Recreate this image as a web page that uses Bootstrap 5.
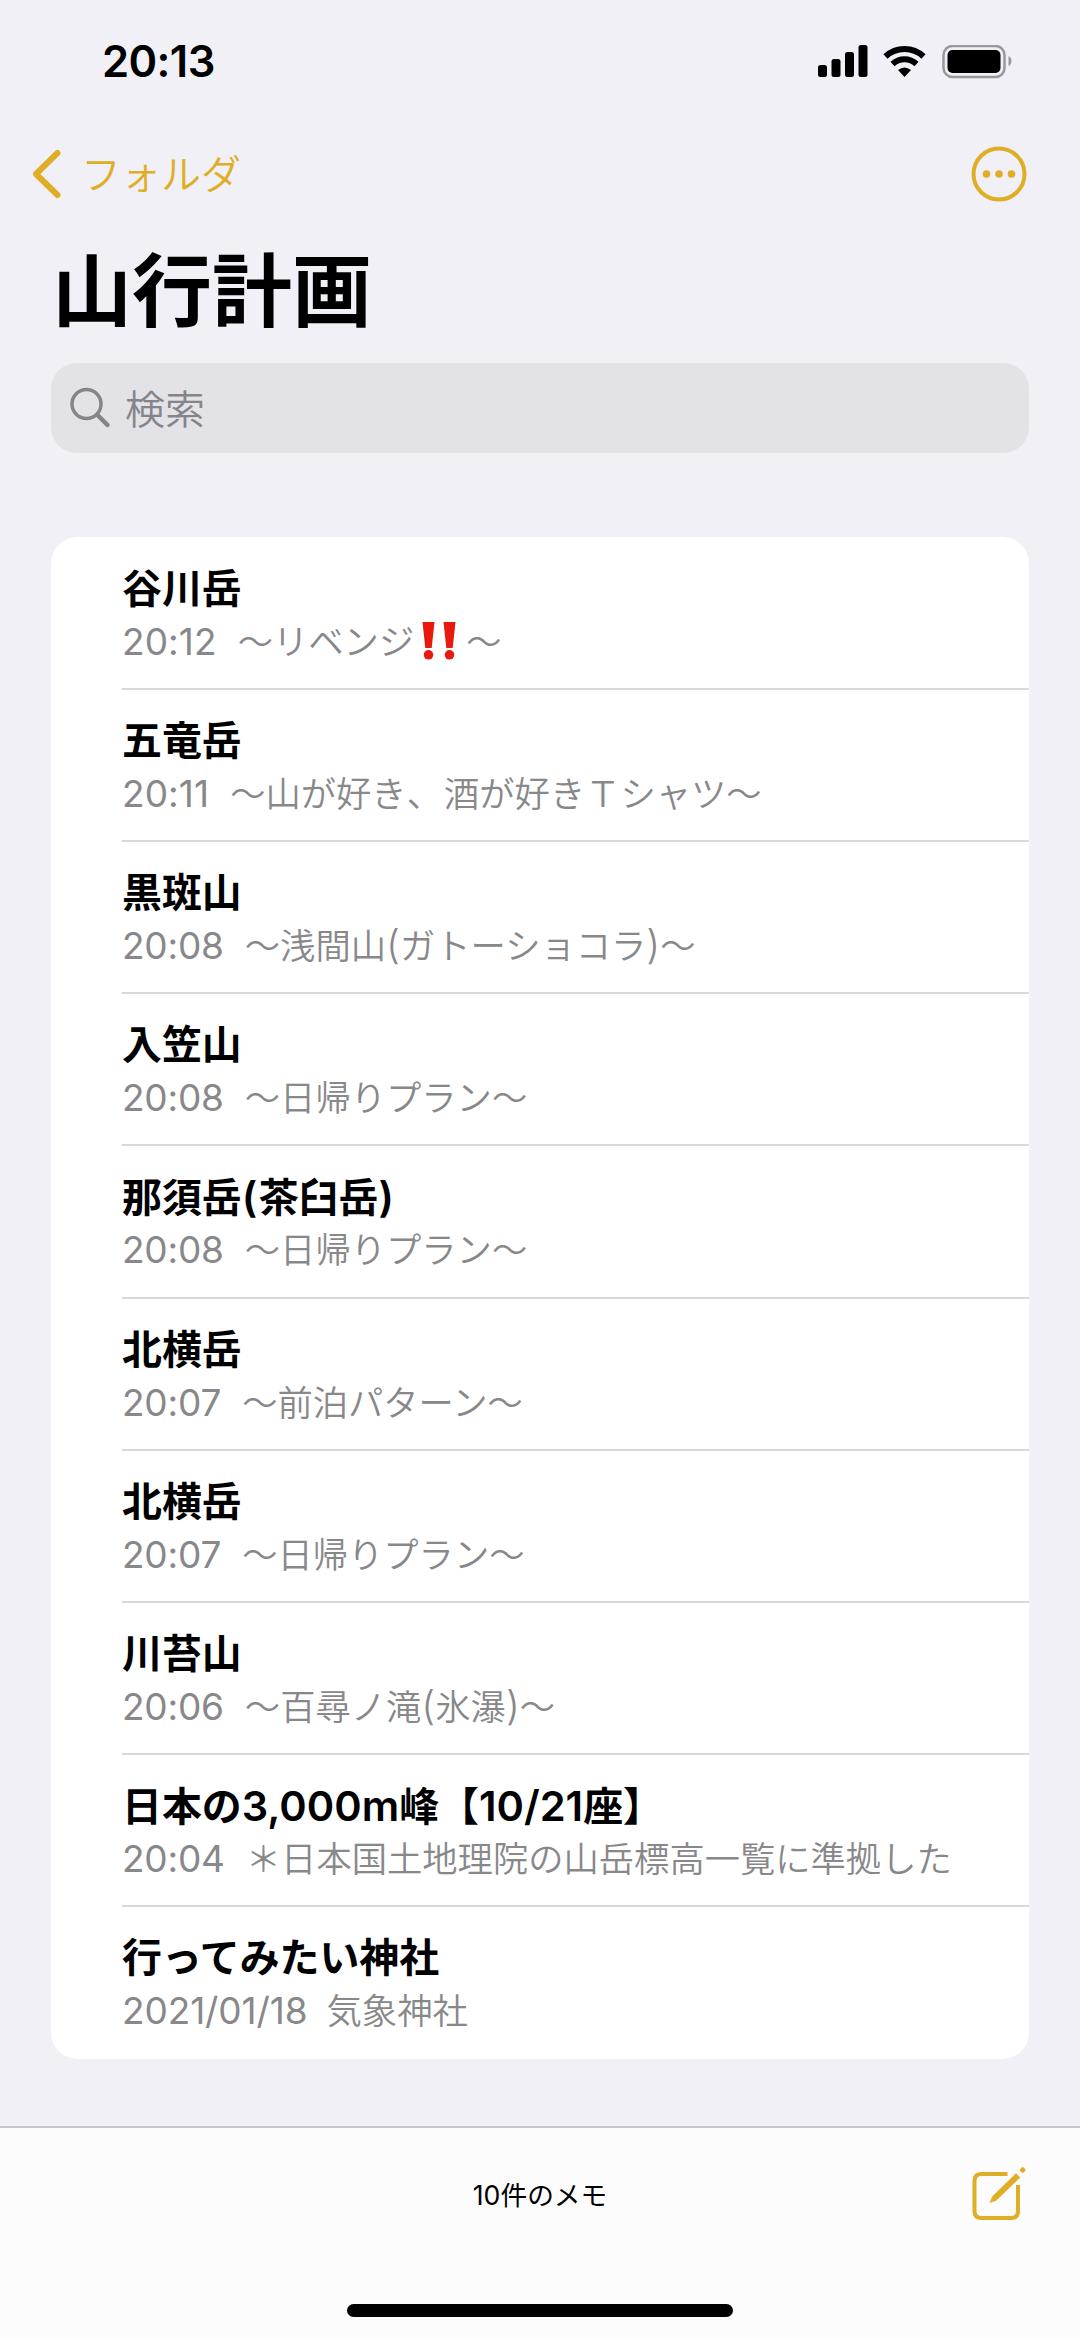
<!DOCTYPE html>
<html lang="ja">
<head>
<meta charset="utf-8">
<meta name="viewport" content="width=device-width, initial-scale=1">
<title>山行計画</title>
<link href="https://cdn.jsdelivr.net/npm/bootstrap@5.3.0/dist/css/bootstrap.min.css" rel="stylesheet">
<style>
:root{--accent:#dfae26}
body{background:#f1f0f6;font-family:Inter,"Noto Sans CJK JP",sans-serif;color:#000;height:2337px;overflow:hidden}
svg{display:block;flex:none}
.status{height:124px;padding:0 67px 0 102px}
.clock{font-size:43.5px;font-weight:600;line-height:1;letter-spacing:-.6px}
.topnav{height:100px;padding:0 53px 0 32px}
.back{color:var(--accent);font-size:40px;line-height:1;font-weight:350;text-decoration:none}
.back span{margin:2px 0 0 19px}
.page-title{font-size:80px;font-weight:700;line-height:1;height:139px;padding:27px 0 0 52px;margin:0}
.search{height:90px;margin:0 51px;border-radius:26px;background:#e3e2e7;padding-left:19px;color:#858589;font-size:40px;line-height:1;font-weight:350}
.search span{margin:4px 0 0 14px}
.notes{margin:84px 51px 0;border-radius:26px;--bs-list-group-border-radius:26px}
.note{height:152.15px;padding:0 0 0 71px;border:0;background:#fff;color:#000}
.note:first-child{height:153px;padding-top:1px}
.note-in{height:100%;border-bottom:2px solid #d8d8da;padding-top:30px}
.note:last-child .note-in{border:0}
.ttl{font-size:39.9px;line-height:42px;height:52px;font-weight:700;white-space:nowrap}
.ttl .lat{font-size:41.6px;font-weight:600}
.ttl .paren{letter-spacing:1.5px}
.sub{font-size:35.3px;line-height:44px;height:44px;font-weight:350;color:#88888a;white-space:nowrap}
.sub .lat{font-size:40px;font-weight:300;line-height:1}
.sub>span:not(.time){padding-top:1px}
.comma{letter-spacing:2px}
.time{font-size:37px;font-weight:400;margin-right:21px;letter-spacing:-.2px}
.time.ones{letter-spacing:.1px}
.time.date{letter-spacing:-.1px;margin-right:19px}
.toolbar{height:211px;border-top:2px solid #c6c6ca;background:#fcfcfd}
.count{font-size:26.7px;line-height:1;font-weight:400;margin-top:54px}
.home{width:386px;height:13px;border-radius:7px;background:#000;margin-bottom:20px}
.compose{left:971px;top:39px}
</style>
</head>
<body class="d-flex flex-column">
<header>
<div class="status d-flex align-items-center justify-content-between">
<span class="clock">20:13</span>
<svg width="195" height="34" viewBox="0 0 195 34"><g><rect x="0" y="20" width="9" height="12" rx="2.5"/><rect x="13.500" y="14" width="9" height="18" rx="2.500"/><rect x="27" y="7" width="9" height="25" rx="2.500"/><rect x="40.500" y="0" width="9" height="32" rx="2.500"/></g>
<g fill="none" stroke="#000" stroke-width="6"><path d="M67.500 11.500a28 28 0 0 1 38 0"/><path d="M74.500 19a17.500 17.500 0 0 1 24 0"/></g><path d="M80 25q6.500-5 13 0l-6.500 7z"/>
<rect x="125.500" y="1" width="61" height="31" rx="9" fill="none" stroke="#98979c" stroke-width="2.500"/><rect x="129.500" y="5" width="53" height="23" rx="5"/><path d="M190.500 11q3 1.500 3 5t-3 5z" fill="#98979c"/></svg>
</div>
<nav class="topnav d-flex align-items-center justify-content-between">
<a href="#" class="back d-flex align-items-center"><svg width="30" height="50" viewBox="0 0 30 50"><path d="M25.500 4 4 25l21.500 21" fill="none" stroke="#dfae26" stroke-width="6" stroke-linecap="round" stroke-linejoin="round"/></svg><span>フォルダ</span></a>
<svg width="56" height="56" viewBox="0 0 56 56" fill="#dfae26"><circle cx="28" cy="28" r="25.500" fill="none" stroke="#dfae26" stroke-width="4"/><circle cx="15.500" cy="28" r="3.800"/><circle cx="28" cy="28" r="3.800"/><circle cx="40.500" cy="28" r="3.800"/></svg>
</nav>
<h1 class="page-title">山行計画</h1>
</header>
<div class="search d-flex align-items-center"><svg width="41" height="42" viewBox="0 0 41 42" fill="none" stroke="#858589"><circle cx="16.500" cy="17" r="14.500" stroke-width="3.500"/><path d="m27.500 28 10 10" stroke-width="4.500" stroke-linecap="round"/></svg><span>検索</span></div>
<main class="notes list-group list-group-flush overflow-hidden">
<div class="list-group-item note"><div class="note-in"><div class="ttl">谷川岳</div><div class="sub d-flex"><span class="time ones">20:12</span><span>〜リベンジ</span><svg width="52" height="44" viewBox="0 0 52 44" fill="#e8190f"><path d="M8.500 2h12l-2.800 26h-6.400zM29.500 2h12l-2.800 26h-6.400z"/><circle cx="14.500" cy="34.800" r="4.800"/><circle cx="35.500" cy="34.800" r="4.800"/></svg><span>〜</span></div></div></div>
<div class="list-group-item note"><div class="note-in"><div class="ttl">五竜岳</div><div class="sub d-flex"><span class="time ones">20:11</span><span>〜山が好き<span class="comma">、</span>酒が好きＴシャツ〜</span></div></div></div>
<div class="list-group-item note"><div class="note-in"><div class="ttl">黒斑山</div><div class="sub d-flex"><span class="time">20:08</span><span>〜浅間山<span class="lat">(</span>ガトーショコラ<span class="lat">)</span>〜</span></div></div></div>
<div class="list-group-item note"><div class="note-in"><div class="ttl">入笠山</div><div class="sub d-flex"><span class="time">20:08</span><span>〜日帰りプラン〜</span></div></div></div>
<div class="list-group-item note"><div class="note-in"><div class="ttl">那須岳<span class="lat paren">(</span>茶臼岳<span class="lat paren">)</span></div><div class="sub d-flex"><span class="time">20:08</span><span>〜日帰りプラン〜</span></div></div></div>
<div class="list-group-item note"><div class="note-in"><div class="ttl">北横岳</div><div class="sub d-flex"><span class="time">20:07</span><span>〜前泊パターン〜</span></div></div></div>
<div class="list-group-item note"><div class="note-in"><div class="ttl">北横岳</div><div class="sub d-flex"><span class="time">20:07</span><span>〜日帰りプラン〜</span></div></div></div>
<div class="list-group-item note"><div class="note-in"><div class="ttl">川苔山</div><div class="sub d-flex"><span class="time">20:06</span><span>〜百尋ノ滝<span class="lat">(</span>氷瀑<span class="lat">)</span>〜</span></div></div></div>
<div class="list-group-item note"><div class="note-in"><div class="ttl">日本の<span class="lat">3,000m</span>峰【<span class="lat">10/21</span>座】</div><div class="sub d-flex"><span class="time">20:04</span><span>＊日本国土地理院の山岳標高一覧に準拠した</span></div></div></div>
<div class="list-group-item note"><div class="note-in"><div class="ttl">行ってみたい神社</div><div class="sub d-flex"><span class="time date">2021/01/18</span><span>気象神社</span></div></div></div>
</main>
<footer class="toolbar mt-auto position-relative d-flex flex-column align-items-center">
<div class="count">10件のメモ</div>
<svg class="compose position-absolute" width="56" height="56" viewBox="0 0 56 56" fill="none" stroke="#dfae26" stroke-width="4"><path d="M36.500 7H10.500q-7 0-7 7v30q0 7 7 7h29.500q7 0 7-7V18"/><path d="m19 35.500 2.500-6L45 6.500l4 4L25 33.500z" fill="#dfae26" stroke="#dfae26" stroke-width=".6" stroke-linejoin="round"/><rect x="49.200" y=".500" width="5" height="5" rx="1.800" transform="rotate(45 51.700 3)" fill="#dfae26" stroke="none"/></svg>
<div class="home mt-auto"></div>
</footer>
<script src="https://cdn.jsdelivr.net/npm/bootstrap@5.3.0/dist/js/bootstrap.bundle.min.js"></script>
</body>
</html>
